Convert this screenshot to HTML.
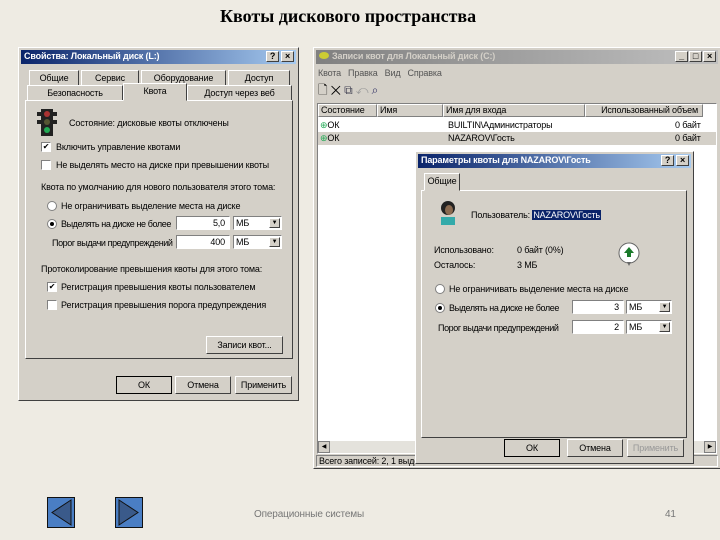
<!DOCTYPE html>
<html><head><meta charset="utf-8"><style>
*{margin:0;padding:0;box-sizing:border-box}
body{width:720px;height:540px;background:#eeebe3;position:relative;overflow:hidden;font-family:"Liberation Sans",sans-serif;font-size:9px;color:#000;letter-spacing:-0.15px}
.a{position:absolute;white-space:nowrap}
.win{position:absolute;background:#d4d0c8;border:1px solid;border-color:#fff #404040 #404040 #fff}
.tb{position:absolute;left:2px;right:2px;height:14px;color:#fff;font-weight:bold;padding:1px 3px;font-size:9px}
.blue{background:linear-gradient(90deg,#0a246a,#a6caf0)}
.grey{background:linear-gradient(90deg,#808080,#c0c0c0);color:#d4d0c8}
.tbtn{position:absolute;top:1px;width:13px;height:11px;background:#d4d0c8;border:1px solid;border-color:#fff #404040 #404040 #fff;color:#000;font-size:9px;text-align:center;line-height:9px}
.btn{position:absolute;height:18px;background:#d4d0c8;border:1px solid;border-color:#fff #404040 #404040 #fff;text-align:center;line-height:16px}
.in{position:absolute;height:14px;background:#fff;border:1px solid;border-color:#808080 #fff #fff #808080;text-align:right;padding-right:4px;line-height:12px}
.sel{position:absolute;height:14px;background:#fff;border:1px solid;border-color:#808080 #fff #fff #808080;padding-left:2px;line-height:12px}
.sel i{position:absolute;right:1px;top:1px;width:11px;height:10px;background:#d4d0c8;border:1px solid;border-color:#fff #404040 #404040 #fff;font-style:normal;font-size:6px;text-align:center;line-height:8px}
.cb{position:absolute;width:10px;height:10px;background:#fff;border:1px solid;border-color:#808080 #fff #fff #808080;font-size:8px;line-height:8px;text-align:center}
.rb{position:absolute;width:10px;height:10px;background:#fff;border-radius:50%;border:1px solid #808080}
.rb.on:after{content:"";position:absolute;left:2px;top:2px;width:4px;height:4px;border-radius:50%;background:#000}
.panel{position:absolute;border:1px solid;border-color:#fff #404040 #404040 #fff}
.tab{position:absolute;height:16px;border:1px solid;border-bottom:none;border-color:#fff #404040 #404040 #fff;text-align:center;line-height:14px;background:#d4d0c8}
.hd{position:absolute;top:0;height:13px;border:1px solid;border-color:#fff #808080 #808080 #fff;background:#d4d0c8;padding-left:2px;line-height:11px}
.n{letter-spacing:-0.4px}
</style></head><body>
<div class="a" style="left:220px;top:6px;font-family:'Liberation Serif',serif;font-weight:bold;font-size:18px;letter-spacing:0">Квоты дискового пространства</div>

<!-- left dialog -->
<div class="win" style="left:18px;top:47px;width:281px;height:354px">
 <div class="tb blue" style="top:2px">Свойства: Локальный диск (L:)<span class="tbtn" style="right:17px">?</span><span class="tbtn" style="right:2px">×</span></div>
 <div class="tab" style="left:10px;top:22px;width:50px">Общие</div>
 <div class="tab" style="left:62px;top:22px;width:58px">Сервис</div>
 <div class="tab" style="left:122px;top:22px;width:85px">Оборудование</div>
 <div class="tab" style="left:209px;top:22px;width:62px">Доступ</div>
 <div class="tab" style="left:8px;top:37px;width:96px">Безопасность</div>
 <div class="tab" style="left:104px;top:35px;width:64px;height:18px;z-index:2;border-bottom:1px solid #d4d0c8">Квота</div>
 <div class="tab" style="left:168px;top:37px;width:105px">Доступ через веб</div>
 <div class="panel" style="left:6px;top:52px;width:268px;height:259px"></div>
 <svg class="a" style="left:18px;top:61px" width="20" height="28"><rect x="4" y="0" width="12" height="27" fill="#222"/><rect x="0" y="3" width="4" height="4" fill="#222"/><rect x="16" y="3" width="4" height="4" fill="#222"/><rect x="0" y="11" width="4" height="4" fill="#222"/><rect x="16" y="11" width="4" height="4" fill="#222"/><circle cx="10" cy="5" r="3" fill="#a33"/><circle cx="10" cy="13" r="3" fill="#553"/><circle cx="10" cy="21" r="3" fill="#2a5"/></svg>
 <div class="a" style="left:50px;top:70px">Состояние: дисковые квоты отключены</div>
 <div class="cb" style="left:22px;top:94px">✔</div><div class="a" style="left:37px;top:94px">Включить управление квотами</div>
 <div class="cb" style="left:22px;top:112px"></div><div class="a" style="left:37px;top:112px">Не выделять место на диске при превышении квоты</div>
 <div class="a" style="left:22px;top:134px">Квота по умолчанию для нового пользователя этого тома:</div>
 <div class="rb" style="left:28px;top:153px"></div><div class="a" style="left:42px;top:153px">Не ограничивать выделение места на диске</div>
 <div class="rb on" style="left:28px;top:171px"></div><div class="a n" style="left:42px;top:171px">Выделять на диске не более</div>
 <div class="in" style="left:157px;top:168px;width:54px">5,0</div><div class="sel" style="left:214px;top:168px;width:49px">МБ<i>▼</i></div>
 <div class="a n" style="left:33px;top:190px">Порог выдачи предупреждений</div>
 <div class="in" style="left:157px;top:187px;width:54px">400</div><div class="sel" style="left:214px;top:187px;width:49px">МБ<i>▼</i></div>
 <div class="a" style="left:22px;top:216px">Протоколирование превышения квоты для этого тома:</div>
 <div class="cb" style="left:28px;top:234px">✔</div><div class="a" style="left:42px;top:234px">Регистрация превышения квоты пользователем</div>
 <div class="cb" style="left:28px;top:252px"></div><div class="a" style="left:42px;top:252px">Регистрация превышения порога предупреждения</div>
 <div class="btn" style="left:187px;top:288px;width:77px">Записи квот...</div>
 <div class="btn" style="left:97px;top:328px;width:56px;border:1px solid #000">ОК</div>
 <div class="btn" style="left:156px;top:328px;width:56px">Отмена</div>
 <div class="btn" style="left:216px;top:328px;width:57px">Применить</div>
</div>

<!-- right window -->
<div class="win" style="left:313px;top:47px;width:408px;height:422px">
 <div class="tb grey" style="top:2px"><span style="display:inline-block;width:10px;height:7px;background:#cc3;border-radius:50%;margin-right:3px"></span>Записи квот для Локальный диск (C:)<span class="tbtn" style="right:30px">_</span><span class="tbtn" style="right:16px">□</span><span class="tbtn" style="right:2px">×</span></div>
 <div class="a" style="left:4px;top:20px;color:#555">Квота &nbsp; Правка &nbsp; Вид &nbsp; Справка</div>
 <div class="a" style="left:4px;top:33px;font-size:12px;color:#000">🗋 ✕ <span style="color:#445">⧉</span> <span style="color:#999">↶</span> <span style="color:#336">⌕</span></div>
 <div class="a" style="left:3px;top:55px;width:400px;height:351px;background:#fff;border:1px solid;border-color:#808080 #fff #fff #808080">
  <div class="hd" style="left:0;width:59px">Состояние</div>
  <div class="hd" style="left:59px;width:66px">Имя</div>
  <div class="hd" style="left:125px;width:142px">Имя для входа</div>
  <div class="hd" style="left:267px;width:118px;text-align:right;padding-right:4px">Использованный объем</div>
  <div class="a" style="left:2px;top:15px;width:396px;height:13px;line-height:13px"><span style="color:#2a5">⊕</span>ОК<span class="a" style="left:128px">BUILTIN\Администраторы</span><span class="a" style="left:355px">0 байт</span></div>
  <div class="a" style="left:0;top:28px;width:398px;height:13px;line-height:13px;background:#d4d0c8;padding-left:2px"><span style="color:#2a5">⊕</span>ОК<span class="a" style="left:130px">NAZAROV\Гость</span><span class="a" style="left:357px">0 байт</span></div>
  <div class="a" style="left:0;top:336px;width:398px;height:13px;background:#e4e2dc;border-top:1px solid #fff"><span class="a" style="left:0;width:12px;height:12px;background:#d4d0c8;border:1px solid #808080;font-size:6px;line-height:10px;text-align:center">◀</span><span class="a" style="right:0;width:12px;height:12px;background:#d4d0c8;border:1px solid #808080;font-size:6px;line-height:10px;text-align:center">▶</span></div>
 </div>
 <div class="a" style="left:2px;top:407px;width:402px;height:12px;border:1px solid;border-color:#808080 #fff #fff #808080;padding-left:2px;line-height:10px">Всего записей: 2, 1 выделено</div>
</div>

<!-- inner dialog -->
<div class="win" style="left:415px;top:151px;width:279px;height:313px">
 <div class="tb blue" style="top:2px">Параметры квоты для NAZAROV\Гость<span class="tbtn" style="right:17px">?</span><span class="tbtn" style="right:2px">×</span></div>
 <div class="tab" style="left:8px;top:21px;width:36px;height:18px;z-index:2;border-bottom:1px solid #d4d0c8">Общие</div>
 <div class="panel" style="left:5px;top:38px;width:266px;height:248px"></div>
 <svg class="a" style="left:22px;top:48px" width="20" height="26"><circle cx="10" cy="8" r="7" fill="#222"/><ellipse cx="11" cy="10" rx="4" ry="5" fill="#8a6a50"/><rect x="3" y="17" width="14" height="8" fill="#3aa" /></svg>
 <div class="a" style="left:55px;top:58px">Пользователь: <span style="background:#0a246a;color:#fff;padding:0 1px">NAZAROV\Гость</span></div>
 <div class="a" style="left:18px;top:93px">Использовано:</div><div class="a" style="left:101px;top:93px">0 байт (0%)</div>
 <div class="a" style="left:18px;top:108px">Осталось:</div><div class="a" style="left:101px;top:108px">3 МБ</div>
 <svg class="a" style="left:201px;top:89px" width="26" height="26"><circle cx="12" cy="12" r="10" fill="#fff" stroke="#666"/><path d="M12 6l5 6h-3v4h-4v-4H7z" fill="#1a7a2a"/><path d="M10 21l2 4 2-4z" fill="#666"/></svg>
 <div class="rb" style="left:19px;top:132px"></div><div class="a" style="left:33px;top:132px">Не ограничивать выделение места на диске</div>
 <div class="rb on" style="left:19px;top:151px"></div><div class="a n" style="left:33px;top:151px">Выделять на диске не более</div>
 <div class="in" style="left:156px;top:148px;width:52px">3</div><div class="sel" style="left:210px;top:148px;width:46px">МБ<i>▼</i></div>
 <div class="a n" style="left:22px;top:171px">Порог выдачи предупреждений</div>
 <div class="in" style="left:156px;top:168px;width:52px">2</div><div class="sel" style="left:210px;top:168px;width:46px">МБ<i>▼</i></div>
 <div class="btn" style="left:88px;top:287px;width:56px;border:1px solid #000">ОК</div>
 <div class="btn" style="left:151px;top:287px;width:56px">Отмена</div>
 <div class="btn" style="left:211px;top:287px;width:57px;color:#999">Применить</div>
</div>

<!-- footer -->
<svg class="a" style="left:47px;top:497px" width="28" height="31"><rect x="0.5" y="0.5" width="27" height="30" fill="#4a7ec4" stroke="#111"/><path d="M24 3L5 15.5 24 28z" fill="#3a5a8a" stroke="#111"/></svg>
<svg class="a" style="left:115px;top:497px" width="28" height="31"><rect x="0.5" y="0.5" width="27" height="30" fill="#4a7ec4" stroke="#111"/><path d="M4 3L23 15.5 4 28z" fill="#3a5a8a" stroke="#111"/></svg>
<div class="a" style="left:254px;top:509px;font-size:10px;color:#777">Операционные системы</div>
<div class="a" style="left:665px;top:509px;font-size:10px;color:#777">41</div>
</body></html>
